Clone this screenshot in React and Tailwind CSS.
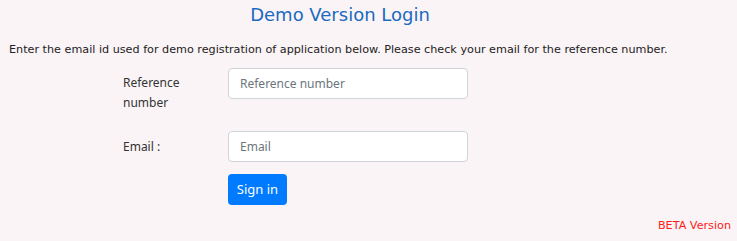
import React from 'react';

export default function App() {
  return (
    <div className="w-[737px] h-[241px] bg-[#faf4f6] relative overflow-hidden">
      <h2 className="w-[680px] text-center pt-[3px] text-[18px] leading-[24px] text-[#1b6ac0] font-['DejaVu_Sans',sans-serif]">
        Demo Version Login
      </h2>
      <p className="mt-[15px] ml-[9px] text-[11.2px] leading-[16px] text-[#222] font-['DejaVu_Sans',sans-serif]">
        Enter the email id used for demo registration of application below. Please check your email for the reference number.
      </p>
      <form className="mt-[10px] font-['Noto_Sans',sans-serif] text-[12px] text-[#333]">
        <div className="flex items-start">
          <label className="w-[105px] ml-[123px] pt-[5px] leading-[20px]">
            Reference
            <br />
            number
          </label>
          <input
            placeholder="Reference number"
            className="w-[240px] h-[31px] px-[11px] bg-white border border-[#ced4da] rounded-[4px] text-[12px] placeholder:text-[#6c757d] outline-none"
          />
        </div>
        <div className="flex items-start mt-[18px]">
          <label className="w-[105px] ml-[123px] pt-[6px] leading-[20px]">Email :</label>
          <input
            placeholder="Email"
            className="w-[240px] h-[31px] px-[11px] bg-white border border-[#ced4da] rounded-[4px] text-[12px] placeholder:text-[#6c757d] outline-none"
          />
        </div>
        <div className="ml-[228px] mt-[12px]">
          <button
            type="button"
            className="w-[59px] h-[31px] bg-[#007bff] text-white rounded-[4px] text-[13px]"
          >
            Sign in
          </button>
        </div>
      </form>
      <div className="absolute right-[6px] bottom-[6px] text-[11.2px] text-[#ff1a1a] font-['DejaVu_Sans',sans-serif]">
        BETA Version
      </div>
    </div>
  );
}
